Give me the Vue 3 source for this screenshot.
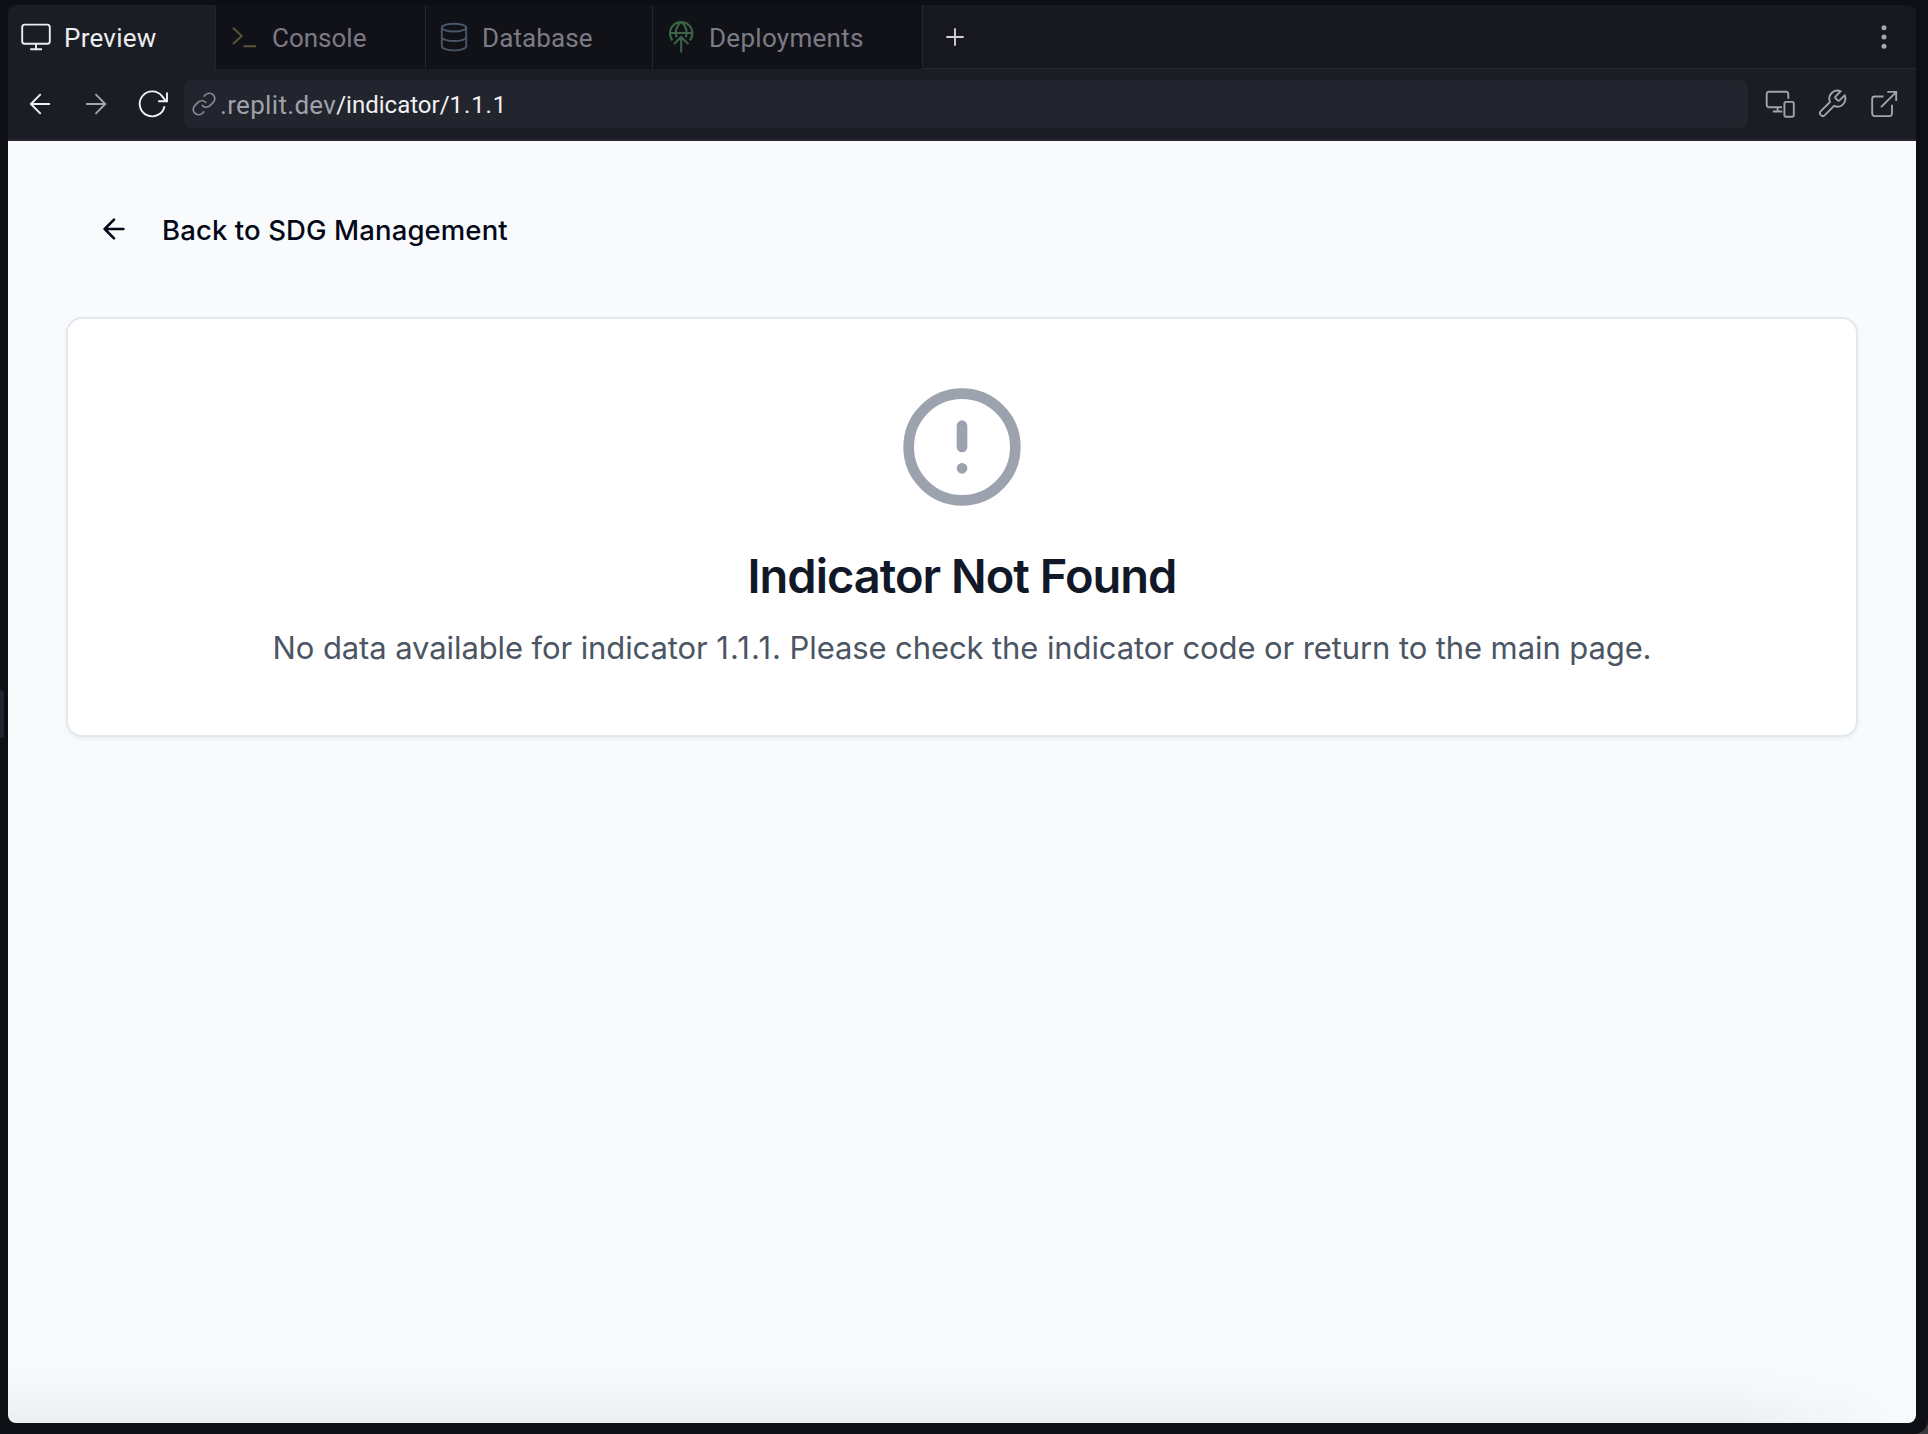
<script setup>
const tabs = [
  { name: 'Preview', icon: 'monitor' },
  { name: 'Console', icon: 'prompt' },
  { name: 'Database', icon: 'database' },
  { name: 'Deployments', icon: 'deploy' },
]
</script>

<template>
  <div class="desktop">
    <div class="handle"></div>
    <main class="pane">
      <nav class="tabs">
        <div v-for="(tab, i) in tabs" :key="tab.name" class="tab" :class="[tab.icon, { active: i === 0 }]">
          <svg v-if="tab.icon === 'monitor'" class="ic" viewBox="0 0 32 32">
            <rect x="2.2" y="3.6" width="27.6" height="19.2" rx="2.6" />
            <path d="M16 23v5M10.2 28.2h11.8" />
          </svg>
          <svg v-else-if="tab.icon === 'prompt'" class="ic" viewBox="0 0 32 32">
            <path d="M5 6.8l8.7 8.1L5 23M15.4 25.3H28" />
          </svg>
          <svg v-else-if="tab.icon === 'database'" class="ic" viewBox="0 0 32 32">
            <ellipse cx="16" cy="6.6" rx="12.2" ry="3.9" />
            <path d="M3.8 6.6v18.6c0 2.2 5.4 4.2 12.2 4.2s12.2-2 12.2-4.2V6.6M3.8 15.9c0 2.2 5.4 4.1 12.2 4.1s12.2-1.9 12.2-4.1" />
          </svg>
          <svg v-else class="ic" viewBox="0 0 32 32">
            <path d="M7.4 19.3A11.2 11.2 0 1 1 24.9 19.3M5 12h22.4M16.2 1C12.6 4 10.8 8 10.8 12c0 1.7.3 3 .8 4.4M16.2 1c3.6 3 5.4 7 5.4 11 0 1.7-.3 3-.8 4.4M16.2 16.2V31.4M9 23.1l7.2-7.1 7.2 7.1" />
          </svg>
          <span>{{ tab.name }}</span>
        </div>
        <div class="rest">
          <svg class="ic plus" viewBox="0 0 32 32"><path d="M7.3 16h17.4M16 7.3v17.4" /></svg>
          <svg class="ic dots" viewBox="0 0 32 32">
            <circle cx="16" cy="6.7" r="2.5" /><circle cx="16" cy="16" r="2.5" /><circle cx="16" cy="25.3" r="2.5" />
          </svg>
        </div>
      </nav>

      <div class="toolbar">
        <div class="history">
          <svg class="ic bright" viewBox="0 0 32 32"><path d="M26 16H6.6M16.7 6.2L6.9 16l9.8 9.8" /></svg>
          <svg class="ic" viewBox="0 0 32 32"><path d="M6 16h19.4M15.5 6.2l9.8 9.8-9.8 9.8" /></svg>
          <svg class="ic bright" viewBox="0 0 32 32">
            <path d="M31 4.4v8.8H22.2M30 13.2L26.2 8.3A12.5 12.5 0 1 0 28.5 18.2" />
          </svg>
        </div>
        <div class="address">
          <svg class="link" viewBox="0 0 24 24">
            <path d="M10 13a5 5 0 0 0 7.54.54l3-3a5 5 0 0 0-7.07-7.07l-1.72 1.71" />
            <path d="M14 11a5 5 0 0 0-7.54-.54l-3 3a5 5 0 0 0 7.07 7.07l1.71-1.71" />
          </svg>
          <span class="host">.replit.dev</span><span class="path">/indicator/<span class="code">1.1.1</span></span>
        </div>
        <div class="actions">
          <svg class="ic" viewBox="0 0 32 32">
            <path d="M24.3 10.8V6a2.2 2.2 0 0 0-2.2-2.2H4.9A2.2 2.2 0 0 0 2.7 6v11a2.2 2.2 0 0 0 2.2 2.2h13.2M13.6 19.4v4M8.8 23.5h9.5" />
            <rect x="20.4" y="13.9" width="9.4" height="14.8" rx="1.8" />
          </svg>
          <svg class="ic" viewBox="0 0 24 24">
            <path class="thin" d="M14.7 6.3a1 1 0 0 0 0 1.4l1.6 1.6a1 1 0 0 0 1.4 0l3.77-3.77a6 6 0 0 1-7.94 7.94l-6.91 6.91a2.12 2.12 0 0 1-3-3l6.91-6.91a6 6 0 0 1 7.94-7.94l-3.76 3.76z" />
          </svg>
          <svg class="ic" viewBox="0 0 32 32">
            <path d="M15.6 8.5H6.7A2.5 2.5 0 0 0 4.2 11v14.6a2.5 2.5 0 0 0 2.5 2.5h14.8a2.5 2.5 0 0 0 2.5-2.5v-8.9M13 19.2L28.4 3.8M19.3 3.9h8.9v9.2" />
          </svg>
        </div>
      </div>

      <section class="page">
        <button class="back">
          <svg viewBox="0 0 24 24"><path d="m12 19-7-7 7-7M19 12H5" /></svg>
          <span>Back to SDG Management</span>
        </button>
        <div class="card">
          <svg viewBox="0 0 24 24"><circle cx="12" cy="12" r="10" /><path d="M12 8v4M12 16h.01" /></svg>
          <h2>Indicator Not Found</h2>
          <p>No data available for indicator <span class="num">1.1.1</span>. Please check the indicator code or return to the main page.</p>
        </div>
      </section>
    </main>
  </div>
</template>

<style>
body { margin: 0; background: #3c3a3c; }
</style>

<style scoped>
* { box-sizing: border-box; }
.desktop {
  position: relative;
  width: 1928px;
  height: 1434px;
  padding: 5px 12px 11px 8px;
  background: #0e0f14;
  border-bottom-right-radius: 14px;
  overflow: hidden;
}
.handle {
  position: absolute;
  left: 0;
  top: 690px;
  width: 4px;
  height: 48px;
  border-radius: 0 3px 3px 0;
  background: #22242d;
}
.pane {
  display: flex;
  flex-direction: column;
  height: 1418px;
  border-radius: 8px;
  overflow: hidden;
  background: #1a1d24;
  font-family: Roboto, "Noto Sans", sans-serif;
}
.ic {
  display: block;
  flex: none;
  width: 32px;
  height: 32px;
  fill: none;
  stroke: currentColor;
  stroke-width: 1.9;
}
.tabs { display: flex; height: 64px; flex: none; }
.tab {
  display: flex;
  align-items: center;
  gap: 12px;
  padding-left: 12px;
  background: #111217;
  border-right: 1px solid #25262d;
  color: #7c7b85;
  font-size: 26px;
  line-height: 32px;
  white-space: nowrap;
}
.tab span { margin-top: 2px; }
.tab.active { background: #1a1d24; color: #ededf0; }
.tab.monitor { width: 208px; letter-spacing: 0.25px; }
.tab.prompt { width: 210px; }
.tab.database { width: 227px; letter-spacing: 0.1px; }
.tab.deploy { width: 270px; letter-spacing: 0.28px; }
.prompt .ic { color: #5d553b; }
.database .ic { color: #4a5668; }
.deploy .ic { color: #3c6547; stroke-width: 2; }
.rest {
  flex: 1;
  display: flex;
  align-items: center;
  justify-content: space-between;
  padding: 1px 16px 0 16px;
  background: #17171f;
  border-bottom: 1px solid #2a2933;
}
.plus { color: #cfcfd4; }
.dots { fill: #a6a8b0; stroke: none; }
.toolbar {
  display: flex;
  align-items: center;
  gap: 16px;
  flex: none;
  height: 72px;
  padding: 0 16px;
  border-bottom: 2px solid #2a2733;
}
.history, .actions { display: flex; color: #a2a4ad; }
.history { gap: 24px; }
.actions { gap: 20px; }
.history .bright { color: #f2f2f4; }
.thin { stroke-width: 1.4; }
.address {
  flex: 1;
  display: flex;
  align-items: center;
  height: 48px;
  padding-left: 7px;
  border-radius: 8px;
  background: #22252d;
  font-size: 26px;
  line-height: 32px;
}
.address > span { margin-top: 1px; }
.link {
  width: 26px;
  height: 26px;
  margin-right: 3px;
  fill: none;
  stroke: #8a8c96;
  stroke-width: 1.5;
}
.host { color: #9fa1ab; letter-spacing: 0.32px; }
.path { color: #f0f0f2; font-size: 24px; }
.code { letter-spacing: 0.9px; }
.page {
  position: relative;
  flex: 1;
  padding: 48px 58px;
  background: #f9fafc;
  font-family: Inter, "Liberation Sans", sans-serif;
}
.page::after {
  content: "";
  position: absolute;
  inset: auto 0 0 0;
  height: 70px;
  background: linear-gradient(to bottom, rgba(20, 20, 20, 0), rgba(20, 20, 20, 0.012) 45%, rgba(20, 20, 20, 0.055));
  mask-image: linear-gradient(to right, #000 calc(100% - 190px), transparent calc(100% - 10px));
}
.back {
  display: flex;
  align-items: center;
  gap: 32px;
  height: 80px;
  margin: 0 0 48px;
  padding: 0 32px;
  border: 0;
  background: none;
  color: #020817;
  font: 500 27.5px/40px Inter, sans-serif;
  letter-spacing: 0.11px;
  white-space: nowrap;
}
.back span { margin-top: 2px; }
.back svg {
  width: 32px;
  height: 32px;
  fill: none;
  stroke: currentColor;
  stroke-width: 2;
  stroke-linecap: round;
  stroke-linejoin: round;
}
.card {
  display: flex;
  flex-direction: column;
  align-items: center;
  height: 420px;
  padding: 64px 0;
  border: 2px solid #e2e8f0;
  border-radius: 16px;
  background: #fff;
  box-shadow: 0 2px 4px rgba(0, 0, 0, 0.05);
}
.card svg {
  width: 128px;
  height: 128px;
  flex: none;
  fill: none;
  stroke: #9ca3af;
  stroke-width: 2;
  stroke-linecap: round;
}
h2 {
  margin: 33px 0 16px;
  color: #111827;
  font-size: 47px;
  font-weight: 600;
  letter-spacing: -1px;
  line-height: 64px;
  white-space: nowrap;
}
p {
  margin: 0;
  color: #4b5563;
  font-size: 31px;
  letter-spacing: -0.1px;
  line-height: 48px;
  white-space: nowrap;
}
.num { letter-spacing: 1.1px; }
</style>
